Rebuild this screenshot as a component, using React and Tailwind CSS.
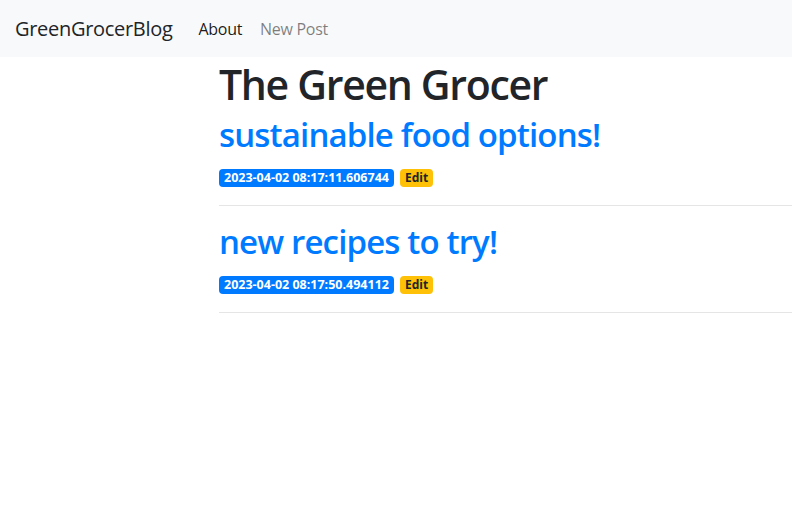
export default function App() {
  const posts = [
    { title: "sustainable food options!", ts: "2023-04-02 08:17:11.606744" },
    { title: "new recipes to try!", ts: "2023-04-02 08:17:50.494112" },
  ];
  return (
    <div className="min-h-screen bg-white text-[#212529]" style={{ fontFamily: '"Open Sans", sans-serif' }}>
      <nav className="flex items-center h-[57px] bg-[#f8f9fa] px-[15px]">
        <span className="text-[20px] tracking-[-0.3px] mr-[26px]">GreenGrocerBlog</span>
        <span className="text-[16px] tracking-[-0.3px] mr-[18px] text-black/90">About</span>
        <span className="text-[16px] tracking-[-0.3px] text-black/50">New Post</span>
      </nav>
      <div className="pl-[219px]">
        <h1 className="text-[41px] font-semibold tracking-[-1.3px] leading-[50px] mt-[2px] mb-0">The Green Grocer</h1>
        {posts.map((p) => (
          <div key={p.ts}>
            <h2 className="text-[33px] font-semibold tracking-[-0.85px] leading-[40px] mt-[6px] text-[#007bff]">{p.title}</h2>
            <div className="flex gap-[6px] mt-[14px]">
              <span className="bg-[#007bff] text-white text-[12.5px] font-bold px-[5px] h-[18px] leading-[18px] rounded-[4px]">{p.ts}</span>
              <span className="bg-[#ffc107] text-[#212529] text-[12px] font-bold px-[5px] h-[18px] leading-[18px] rounded-[4px]">Edit</span>
            </div>
            <hr className="mt-[18px] mb-[16px] border-t border-black/10" />
          </div>
        ))}
      </div>
    </div>
  );
}
